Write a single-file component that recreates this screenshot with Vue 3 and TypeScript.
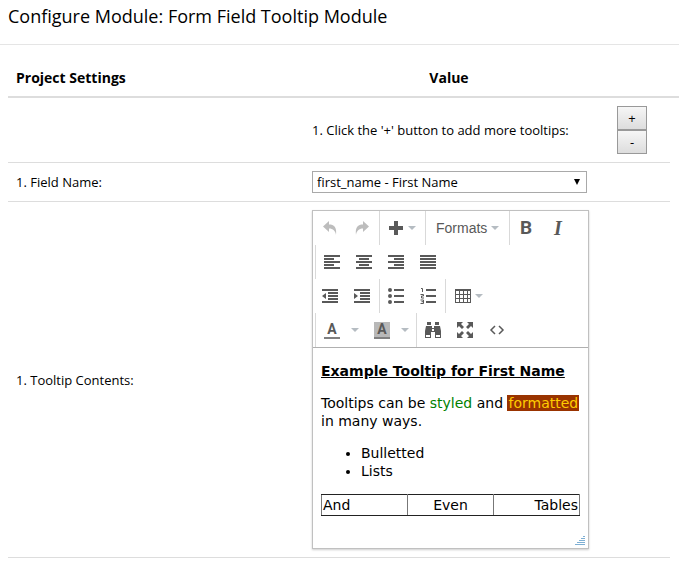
<script setup lang="ts">
import { ref } from 'vue'

interface Tool {
  icon: string
  label: string
  caret?: 'near' | 'split'
  muted?: boolean
}

interface ToolRow {
  inset: boolean
  groups: Tool[][]
}

const toolRows: ToolRow[] = [
  {
    inset: false,
    groups: [
      [
        { icon: 'undo', label: 'Undo', muted: true },
        { icon: 'redo', label: 'Redo', muted: true },
      ],
      [{ icon: 'plus', label: 'Insert', caret: 'near' }],
      [{ icon: 'formats', label: 'Formats', caret: 'near' }],
      [
        { icon: 'bold', label: 'Bold' },
        { icon: 'italic', label: 'Italic' },
      ],
    ],
  },
  {
    inset: true,
    groups: [
      [
        { icon: 'left', label: 'Align left' },
        { icon: 'center', label: 'Align center' },
        { icon: 'right', label: 'Align right' },
        { icon: 'justify', label: 'Justify' },
      ],
    ],
  },
  {
    inset: false,
    groups: [
      [
        { icon: 'outdent', label: 'Decrease indent' },
        { icon: 'indent', label: 'Increase indent' },
      ],
      [
        { icon: 'bullets', label: 'Bullet list' },
        { icon: 'numbers', label: 'Numbered list' },
      ],
      [{ icon: 'table', label: 'Table', caret: 'near' }],
    ],
  },
  {
    inset: true,
    groups: [
      [
        { icon: 'color', label: 'Text color', caret: 'split' },
        { icon: 'highlight', label: 'Background color', caret: 'split' },
      ],
      [
        { icon: 'find', label: 'Find and replace' },
        { icon: 'fullscreen', label: 'Fullscreen' },
        { icon: 'code', label: 'Source code' },
      ],
    ],
  },
]

// Solid shapes on an 18 x 18 grid
const shapes: Record<string, string> = {
  undo: 'M2 7.5L8 2v3.5c5 0 8 2.500 7 10.500C14.500 12 12 9.500 8 9.500V13z',
  redo: 'M16 7.500L10 2v3.500c-5 0-8 2.500-7 10.500C3.500 12 6 9.500 10 9.500V13z',
  plus: 'M7 2h4v5h5v4h-5v5H7v-5H2V7h5z',
  left: 'M1 2h16v2H1zM1 5h10v2H1zM1 8h16v2H1zM1 11h10v2H1zM1 14h16v2H1z',
  center: 'M1 2h16v2H1zM4 5h10v2H4zM1 8h16v2H1zM4 11h10v2H4zM1 14h16v2H1z',
  right: 'M1 2h16v2H1zM7 5h10v2H7zM1 8h16v2H1zM7 11h10v2H7zM1 14h16v2H1z',
  justify: 'M1 2h16v2H1zM1 5h16v2H1zM1 8h16v2H1zM1 11h16v2H1zM1 14h16v2H1z',
  outdent: 'M1 2h16v2H1zM7 5h10v2H7zM7 8h10v2H7zM7 11h10v2H7zM1 14h16v2H1zM5 6v6L1 9z',
  indent: 'M1 2h16v2H1zM7 5h10v2H7zM7 8h10v2H7zM7 11h10v2H7zM1 14h16v2H1zM1 6v6l4-3z',
  bullets:
    'M7 2h10v2H7zM7 8h10v2H7zM7 14h10v2H7zM1 3a2 2 0 1 0 4 0a2 2 0 1 0-4 0M1 9a2 2 0 1 0 4 0a2 2 0 1 0-4 0M1 15a2 2 0 1 0 4 0a2 2 0 1 0-4 0',
  numbers: 'M7 2h10v2H7zM7 8h10v2H7zM7 14h10v2H7z',
  table:
    'M1 2h16v14H1zM2 4v3h3V4zM6 4v3h3V4zM10 4v3h3V4zM14 4v3h2V4zM2 8v3h3V8zM6 8v3h3V8zM10 8v3h3V8zM14 8v3h2V8zM2 12v3h3v-3zM6 12v3h3v-3zM10 12v3h3v-3zM14 12v3h2v-3z',
  find: 'M3 1h4v3H3zM11 1h4v3h-4zM2 5h6v2h2V5h6l1 5v7h-6v-6H7v6H1v-7zM2 14v2h4v-2zM12 14v2h4v-2zM8 8v2h2V8z',
  fullscreen:
    'M1 1h6L5 3l3 3-2 2-3-3-2 2zM17 1v6l-2-2-3 3-2-2 3-3-2-2zM1 17v-6l2 2 3-3 2 2-3 3 2 2zM17 17h-6l2-2-3-3 2-2 3 3 2-2z',
}

const fields = ['first_name - First Name', 'last_name - Last Name', 'email - E-mail']
const fieldName = ref(fields[0])
const tooltipCount = ref(1)

function addTooltip(): void {
  tooltipCount.value += 1
}

function removeTooltip(): void {
  tooltipCount.value = Math.max(1, tooltipCount.value - 1)
}
</script>

<template>
  <main class="dialog">
    <header class="dialog-header">
      <h1>Configure Module: Form Field Tooltip Module</h1>
    </header>

    <table class="settings">
      <colgroup>
        <col />
        <col class="col-value" />
        <col class="col-actions" />
        <col class="col-gutter" />
      </colgroup>
      <thead>
        <tr>
          <th class="name" scope="col">Project Settings</th>
          <th scope="col">Value</th>
          <td colspan="2"></td>
        </tr>
      </thead>
      <tbody>
        <tr>
          <td></td>
          <td class="value">1. Click the '+' button to add more tooltips:</td>
          <td class="actions">
            <button type="button" class="step" @click="addTooltip">+</button>
            <button type="button" class="step" @click="removeTooltip">-</button>
          </td>
        </tr>
        <tr>
          <td><label for="field-name">1. Field Name:</label></td>
          <td class="value">
            <div class="select-box">
              <select id="field-name" v-model="fieldName">
                <option v-for="f in fields" :key="f">{{ f }}</option>
              </select>
              <svg class="select-arrow" viewBox="0 0 6 6" aria-hidden="true"><path d="M0 0h6L3 6z" /></svg>
            </div>
          </td>
          <td></td>
        </tr>
        <tr>
          <td id="contents-label">1. Tooltip Contents:</td>
          <td class="value">
            <div class="editor">
              <div class="toolbar" role="toolbar">
                <div v-for="(row, r) in toolRows" :key="r" class="tool-row" :class="{ inset: row.inset }">
                  <div v-for="(group, g) in row.groups" :key="g" class="tool-group">
                    <button
                      v-for="tool in group"
                      :key="tool.icon"
                      type="button"
                      class="tool"
                      :class="[tool.icon, tool.caret, { muted: tool.muted }]"
                      :aria-label="tool.label"
                    >
                      <span v-if="tool.icon === 'formats'">Formats</span>
                      <span v-else-if="tool.icon === 'bold'" class="glyph-bold">B</span>
                      <span v-else-if="tool.icon === 'italic'" class="glyph-italic">I</span>
                      <span v-else-if="tool.icon === 'color' || tool.icon === 'highlight'" class="glyph-color">A</span>
                      <svg v-else-if="tool.icon === 'code'" class="icon" viewBox="0 0 18 18">
                        <path
                          d="M7 5L3 9l4 4M11 5l4 4-4 4"
                          fill="none"
                          stroke="currentColor"
                          stroke-width="1.5"
                        />
                      </svg>
                      <svg v-else class="icon" viewBox="0 0 18 18">
                        <path :d="shapes[tool.icon]" fill-rule="evenodd" />
                        <path
                          v-if="tool.icon === 'numbers'"
                          d="M2 1.500h1.500V5M1.500 7.500h3v1.500h-2v2h2.500M1.500 13h3v3.500h-3M2.500 14.700h2"
                          fill="none"
                          stroke="currentColor"
                        />
                      </svg>
                      <svg v-if="tool.caret" class="caret" viewBox="0 0 8 4"><path d="M0 0h8L4 4z" /></svg>
                    </button>
                  </div>
                </div>
              </div>
              <div class="content" contenteditable="true" role="textbox" aria-labelledby="contents-label" spellcheck="false">
                <p><strong><u>Example Tooltip for First Name</u></strong></p>
                <p>
                  Tooltips can be <span class="styled">styled</span> and
                  <span class="formatted">formatted</span> in many ways.
                </p>
                <ul>
                  <li>Bulletted</li>
                  <li>Lists</li>
                </ul>
                <table class="sample">
                  <tbody>
                    <tr>
                      <td>And</td>
                      <td class="mid">Even</td>
                      <td class="end">Tables</td>
                    </tr>
                  </tbody>
                </table>
              </div>
              <div class="statusbar">
                <svg class="grip" viewBox="0 0 10 10" aria-hidden="true">
                  <path d="M8 0h2v1H8zM6 2h4v1H6zM4 4h6v1H4zM2 6h8v1H2zM0 8h10v1H0z" />
                </svg>
              </div>
            </div>
          </td>
          <td></td>
        </tr>
      </tbody>
    </table>
  </main>
</template>

<style>
body {
  margin: 0;
  background: #fff;
}
</style>

<style scoped>
.dialog {
  color: #000;
  font: 13px/20px "Open Sans", sans-serif;
}

.dialog-header {
  padding: 4px 8px 16px;
  border-bottom: 1px solid #e5e5e5;
}

h1 {
  margin: 0;
  font-size: 18px;
  font-weight: 400;
  line-height: 24px;
}

.settings {
  width: calc(100% - 8px);
  margin: 15px 0 0 8px;
  border-collapse: separate;
  border-spacing: 0;
  table-layout: fixed;
}

.col-value {
  width: 290px;
}

.col-actions {
  width: 76px;
}

.col-gutter {
  width: 9px;
}

.settings > thead th,
.settings > thead td {
  padding: 8px;
  border-bottom: 2px solid #ddd;
  font-size: 14px;
  font-weight: 700;
}

.settings > thead th.name {
  text-align: left;
}

.settings > tbody > tr > td {
  padding: 8px;
  border-bottom: 1px solid #ddd;
  vertical-align: middle;
}

.settings > tbody > tr > td.value {
  padding-right: 5px;
}

.step {
  display: block;
  width: 30px;
  height: 24px;
  margin: 0 auto;
  padding: 0;
  border: 1px solid #999;
  background: linear-gradient(#f6f6f6, #ddd);
  color: #000;
  font: inherit;
}

.select-box {
  position: relative;
  margin-right: 2px;
}

select {
  display: block;
  width: 100%;
  height: 22px;
  padding: 0 20px 0 4px;
  border: 1px solid #a9a9a9;
  border-radius: 0;
  appearance: none;
  background: #fff;
  color: #000;
  font: inherit;
}

.select-arrow {
  position: absolute;
  top: 8px;
  right: 7px;
  width: 6px;
  height: 6px;
  pointer-events: none;
}

.editor {
  border: 1px solid #c0c0c0;
  background: #fff;
  box-shadow: 0 1px 2px rgba(0, 0, 0, 0.2);
}

.toolbar {
  border-bottom: 1px solid #b0b0b0;
}

.tool-row {
  display: flex;
  height: 34px;
}

.tool-row.inset {
  padding-left: 2px;
}

.tool-group {
  display: flex;
  padding-right: 1px;
  border-left: 1px solid #d9d9d9;
}

.inset .tool-group {
  padding-right: 0;
}

.tool-row:not(.inset) .tool-group:first-child {
  border-left-color: transparent;
}

.tool {
  display: flex;
  align-items: center;
  justify-content: center;
  width: 32px;
  padding: 0;
  border: 0;
  background: none;
  color: #595959;
  font: 14px/20px "Liberation Sans", Arial, sans-serif;
}

.tool.near {
  justify-content: flex-start;
  gap: 3px;
  width: 44px;
  padding-left: 7px;
}

.tool.formats {
  gap: 4px;
  width: 82px;
  padding-left: 10px;
}

.tool.table {
  padding-left: 8px;
}

.tool.split {
  justify-content: flex-start;
  gap: 11px;
  width: 50px;
  padding-left: 8px;
}

.tool.muted {
  color: #bdbdbd;
}

.icon {
  width: 18px;
  height: 18px;
  fill: currentColor;
}

.caret {
  width: 8px;
  height: 4px;
  fill: #b5bcc2;
}

.glyph-bold {
  font: 700 19px/20px Roboto, sans-serif;
}

.glyph-italic {
  font: italic 700 20px/20px "Liberation Serif", serif;
}

.glyph-color {
  width: 16px;
  border-bottom: 2px solid #808080;
  font: 700 14px/15px Roboto, sans-serif;
  text-align: center;
}

.highlight .glyph-color {
  background: #b8b8b8;
}

.content {
  padding: 14px 8px 0;
  outline: none;
  font: 14px/18px Verdana, "DejaVu Sans", sans-serif;
}

.content p,
.content ul {
  margin: 0 0 14px;
}

.content ul {
  padding-left: 40px;
}

.styled {
  color: #008000;
}

.formatted {
  padding: 0 1px;
  background: #993300;
  color: #ffcc00;
}

.sample {
  width: 100%;
  border: 1px solid #222;
  border-collapse: collapse;
  table-layout: fixed;
}

.sample td {
  padding: 1px;
  border: 1px solid #777;
  border-top-color: #222;
  border-bottom-color: #222;
}

.sample td.mid {
  text-align: center;
}

.sample td.end {
  text-align: right;
}

.statusbar {
  display: flex;
  align-items: flex-end;
  justify-content: flex-end;
  height: 32px;
  padding: 0 3px 2px 0;
  box-sizing: border-box;
}

.grip {
  width: 10px;
  height: 10px;
  fill: #7fb0d4;
}
</style>
